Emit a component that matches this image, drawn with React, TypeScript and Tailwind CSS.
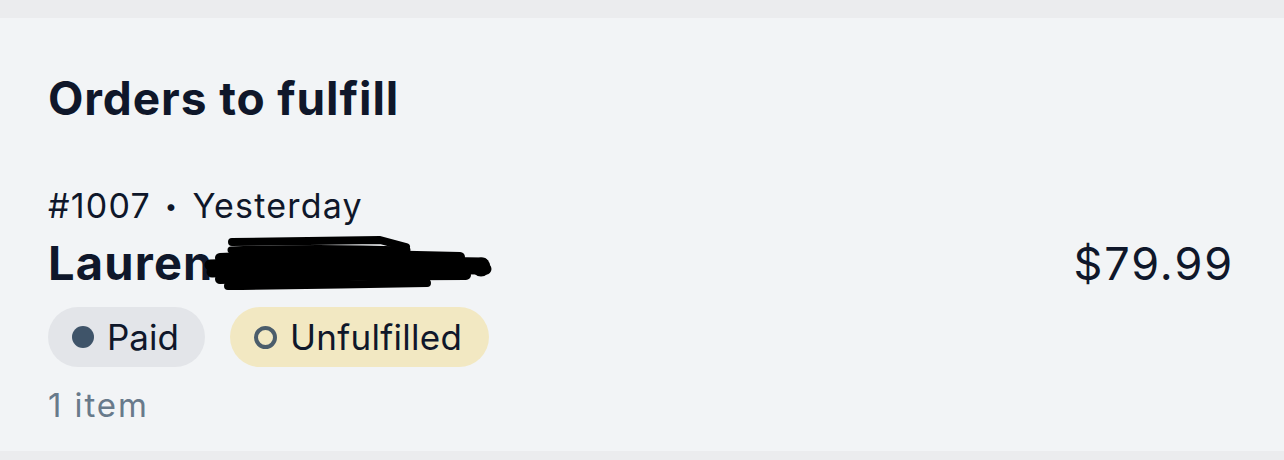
import React from "react";

function Scribble() {
  // hand-drawn redaction marker over the surname
  return (
    <svg
      className="absolute left-[150px] top-[-10px]"
      width="350"
      height="70"
      viewBox="0 0 350 70"
      fill="none"
    >
      <g stroke="#000" strokeLinecap="round" strokeLinejoin="round">
        <path d="M34 13 L182 11 L208 18" strokeWidth="8" />
        <path d="M33 21 Q120 18 209 21" strokeWidth="7" />
        <path d="M22 29 Q140 24 262 28" strokeWidth="10" />
        <path d="M12 36 Q150 31 285 34" strokeWidth="11" />
        <path d="M14 43 Q150 39 288 40" strokeWidth="11" />
        <path d="M22 50 Q150 46 268 46" strokeWidth="10" />
        <path d="M30 57 Q130 56 229 54" strokeWidth="8" />
        <circle cx="283" cy="38" r="9.5" fill="#000" stroke="none" />
      </g>
    </svg>
  );
}

export default function App() {
  return (
    <div
      className="w-[1284px] h-[460px] bg-[#ebecee] flex flex-col overflow-hidden"
      style={{ fontFamily: "Inter, 'Noto Sans', sans-serif" }}
    >
      <div className="h-[18px] shrink-0" />
      <div className="h-[433px] shrink-0 bg-[#f2f4f6] pl-[48px] pr-[50px] pt-[57px] flex flex-col text-[#0f172a]">
        <h1 className="text-[46px] leading-none font-bold tracking-[0.9px]">
          Orders to fulfill
        </h1>
        <div className="mt-[68px] text-[34px] leading-none flex items-center tracking-[1.2px]">
          <span>#1007</span>
          <span className="mx-[14px] text-[22px]">•</span>
          <span>Yesterday</span>
        </div>
        <div className="mt-[16px] flex items-start justify-between">
          <div className="relative text-[47px] leading-none font-bold tracking-[1.2px]">
            <span>Lauren</span>
            <Scribble />
          </div>
          <div className="text-[45px] leading-none mt-[2px] tracking-[1.9px]">$79.99</div>
        </div>
        <div className="mt-[21px] flex gap-[25px]">
          <div className="h-[60px] rounded-full bg-[#e3e5e9] pl-[24px] pr-[26px] flex items-center gap-[13px]">
            <span className="w-[22px] h-[22px] rounded-full bg-[#3f5469]" />
            <span className="text-[35px] leading-none">Paid</span>
          </div>
          <div className="h-[60px] rounded-full bg-[#f2e8c2] pl-[24px] pr-[27px] flex items-center gap-[13px]">
            <span className="w-[23px] h-[23px] rounded-full border-[4px] border-[#4b5d6b]" />
            <span className="text-[35px] leading-none tracking-[0.3px]">Unfulfilled</span>
          </div>
        </div>
        <div className="mt-[22px] text-[33px] leading-none text-[#687a8b] tracking-[1.9px]">
          1 item
        </div>
      </div>
    </div>
  );
}
